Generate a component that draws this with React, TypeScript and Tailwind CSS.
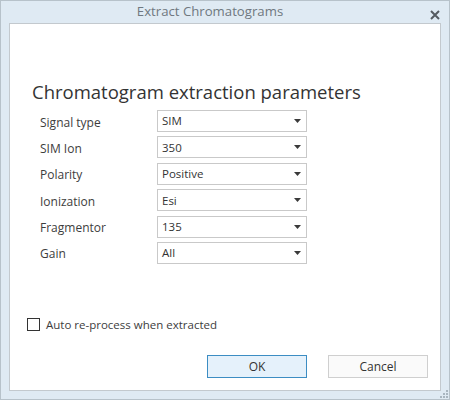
const params = [
  { label: "Signal type", value: "SIM" },
  { label: "SIM Ion", value: "350" },
  { label: "Polarity", value: "Positive" },
  { label: "Ionization", value: "Esi" },
  { label: "Fragmentor", value: "135" },
  { label: "Gain", value: "All" },
];

function Caret() {
  return (
    <svg width="7" height="4" viewBox="0 0 7 4" className="shrink-0">
      <path d="M0 0h7L3.5 4z" fill="#3a3a3a" />
    </svg>
  );
}

function Grip() {
  const dots = [
    [8, 0],
    [5, 3],
    [8, 3],
    [2, 6],
    [5, 6],
    [8, 6],
  ];
  return (
    <svg width="10" height="8" viewBox="0 0 10 8" className="absolute bottom-[1px] right-[1px]">
      {dots.map(([x, y]) => (
        <rect key={`${x}-${y}`} x={x} y={y} width="2" height="2" fill="#a9b6c0" />
      ))}
    </svg>
  );
}

export default function App() {
  return (
    <div
      className="relative flex h-[400px] w-[450px] flex-col border border-[#b7c2ca] bg-[#dfeaf3]"
      style={{ fontFamily: '"Open Sans", "Noto Sans", sans-serif' }}
    >
      <div className="relative flex h-[22px] items-center justify-center pr-[30px]">
        <span className="text-[13.2px] text-[#6f7880]">Extract Chromatograms</span>
        <svg
          width="10"
          height="10"
          viewBox="0 0 10 10"
          className="absolute right-[9px] top-[9px]"
        >
          <path d="M1 1l8 8M9 1l-8 8" stroke="#555b61" strokeWidth="2" />
        </svg>
      </div>

      <div className="mx-[8px] flex h-[368px] flex-col border border-[#c3c9ce] bg-white">
        <h1 className="ml-[22px] mt-[55px] text-[18.5px] leading-[26px] text-[#333]">
          Chromatogram extraction parameters
        </h1>

        <div className="mt-[5px] flex flex-col gap-[4.4px]">
          {params.map((p) => (
            <div key={p.label} className="flex h-[22px] items-center">
              <span className="ml-[30px] w-[117px] pt-[3px] text-[12px] text-[#3d3d3d]">{p.label}</span>
              <div className="flex h-[22px] w-[150px] items-center justify-between border border-[#c9c9c9] pl-[4px] pr-[5px]">
                <span className="text-[11.5px] text-[#333]">{p.value}</span>
                <Caret />
              </div>
            </div>
          ))}
        </div>

        <label className="ml-[17px] mt-[52px] flex items-center gap-[6px]">
          <span className="h-[13px] w-[13px] border border-[#333]" />
          <span className="text-[11.5px] text-[#3d3d3d]">Auto re-process when extracted</span>
        </label>

        <div className="mr-[12px] mt-[22px] flex justify-end gap-[21px]">
          <button className="h-[23px] w-[100px] border border-[#3c8dc3] bg-[#e5f1fb] text-[12px] text-[#333]">
            OK
          </button>
          <button className="h-[23px] w-[100px] border border-[#cfcfcf] bg-[#fafafa] text-[12px] text-[#333]">
            Cancel
          </button>
        </div>
      </div>
      <Grip />
    </div>
  );
}
